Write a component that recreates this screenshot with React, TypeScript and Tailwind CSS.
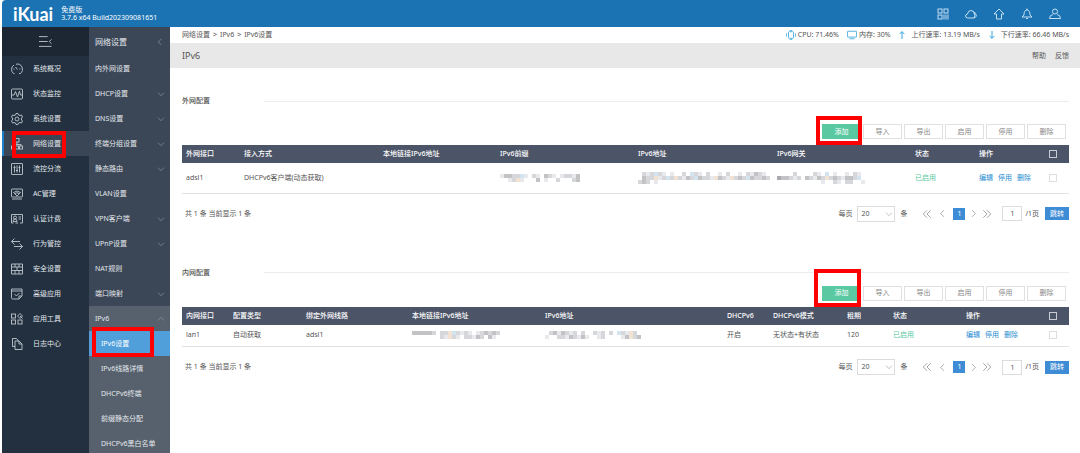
import type { ReactNode } from "react";

const UI_FONT = "font-['Noto_Sans','Noto_Sans_CJK_SC',sans-serif]";

type IconProps = { children: ReactNode; className?: string };

function Icon({ children, className = "size-3" }: IconProps) {
  return (
    <svg viewBox="0 0 24 24" fill="none" stroke="currentColor" strokeWidth="1.8" aria-hidden="true" className={`shrink-0 ${className}`}>
      {children}
    </svg>
  );
}

const down = <path d="M3 8l9 9 9-9" />;
const up = <path d="M3 16l9-9 9 9" />;
const left = <path d="M16 3l-9 9 9 9" />;
const right = <path d="M8 3l9 9-9 9" />;
const doubleLeft = <path d="M12 3l-9 9 9 9M21 3l-9 9 9 9" />;
const doubleRight = <path d="M3 3l9 9-9 9M12 3l9 9-9 9" />;

const mainMenu: { label: string; icon: ReactNode; active?: boolean }[] = [
  { label: "系统概况", icon: <path d="M7 21H5a10.500 10.500 0 0 1 1-17M10 2.500a10.500 10.500 0 0 1 9 18.500h-3M9 8l4 5M5 12h2M17 12h2" /> },
  { label: "状态监控", icon: <><rect x="1" y="2" width="22" height="20" rx="2" /><path d="M1 14h5l3-7 4 11 4-12 2 8h4" /></> },
  { label: "系统设置", icon: <><circle cx="12" cy="12" r="4" /><path d="M10 1h4l1 3 3 1 3-1 2 4-2 2v4l2 2-2 4-3-1-3 1-1 3h-4l-1-3-3-1-3 1-2-4 2-2v-4L1 8l2-4 3 1 3-1z" /></> },
  { label: "网络设置", icon: <><rect x="8" y="1" width="8" height="7" /><path d="M12 8v5M4 16v-3h16v3" /><rect x="1" y="16" width="6" height="6" /><rect x="9" y="16" width="6" height="6" /><rect x="17" y="16" width="6" height="6" /></>, active: true },
  { label: "流控分流", icon: <><rect x="1" y="1" width="22" height="22" rx="1" /><path d="M7 5v14M12 5v14M17 5v14M5 9h4M10 15h4M15 9h4" /></> },
  { label: "AC管理", icon: <><rect x="1" y="2" width="22" height="16" rx="1" /><path d="M5 9q7-6 14 0l-7 7zM8 11q4-3 8 0M2 22h20" /></> },
  { label: "认证计费", icon: <><path d="M5 20H1V3h22v17h-5M9 20h5" /><circle cx="8" cy="9" r="3" /><path d="M4 17q0-5 4-5t4 5zM15 8h5M15 12h5" /></> },
  { label: "行为管控", icon: <path d="M7 1L1 7h17M7 13L1 7M17 11l6 6H6M17 23l6-6" /> },
  { label: "安全设置", icon: <path d="M1 2h22v20H1zM1 8h22M1 15h22M8 2v6M16 2v6M12 8v7M8 15v7M16 15v7" /> },
  { label: "高级应用", icon: <path d="M1 2h21v14l-6 6H3q-2 0-2-3zM1 6h21M7 12l4 4 6-6M22 16h-6v6" /> },
  { label: "应用工具", icon: <><rect x="1" y="2" width="8" height="8" /><rect x="1" y="14" width="8" height="8" /><rect x="14" y="14" width="8" height="8" /><path d="M18 1l5 5-5 5-5-5zM18 6l5 5" /></> },
  { label: "日志中心", icon: <path d="M8 17H3V1h8l4 5M8 6h8l6 6v11H8zM16 6v6h6" /> },
];

const subMenu: { label: string; open?: boolean; expandable?: boolean }[] = [
  { label: "内外网设置" },
  { label: "DHCP设置", expandable: true },
  { label: "DNS设置", expandable: true },
  { label: "终端分组设置", expandable: true },
  { label: "静态路由", expandable: true },
  { label: "VLAN设置" },
  { label: "VPN客户端", expandable: true },
  { label: "UPnP设置", expandable: true },
  { label: "NAT规则" },
  { label: "端口映射", expandable: true },
  { label: "IPv6", expandable: true, open: true },
];

const ipv6Menu = ["IPv6设置", "IPv6线路详情", "DHCPv6终端", "前缀静态分配", "DHCPv6黑白名单"];

function Highlight({ className }: { className: string }) {
  return <span aria-hidden="true" className={`pointer-events-none absolute z-10 border-4 border-[#ff0000] ${className}`} />;
}

function TopBar() {
  const button = "grid size-4 place-items-center";
  return (
    <header className="flex h-[27px] shrink-0 items-center justify-between rounded-tl-sm bg-[#1c73b3] pr-[17px] pl-[11px] text-white">
      <div className="flex items-center gap-2">
        <span className="font-['Lato',sans-serif] text-[18px] leading-5 font-bold">iKuai</span>
        <div className="text-[7px] leading-2">
          <p>免费版</p>
          <p>3.7.6 x64 Build202309081651</p>
        </div>
      </div>
      <div className="flex items-center gap-3 text-[#d5eafa]">
        <button type="button" aria-label="二维码" className={button}>
          <Icon><rect x="2" y="2" width="8" height="8" /><rect x="14" y="2" width="8" height="8" /><rect x="2" y="14" width="8" height="8" /><path d="M14 13v10M18 13v10M22 13v10" /></Icon>
        </button>
        <button type="button" aria-label="云服务" className={button}>
          <Icon><path d="M5 20q-4-1-4-4t4-4q1-7 7-7t7 7q2 3-1 8zM17 8q4 1 4 4 3 2 1 5-1 2-4 3" /></Icon>
        </button>
        <button type="button" aria-label="升级" className={button}>
          <Icon><path d="M12 2L2 12h5v10h10V12h5z" /></Icon>
        </button>
        <button type="button" aria-label="通知" className={button}>
          <Icon><path d="M12 1v3M2 18h20l-4-4q0-10-6-10T6 14zM10 20q2 4 4 0" /></Icon>
        </button>
        <button type="button" aria-label="账户" className={button}>
          <Icon><circle cx="12" cy="7" r="5" /><path d="M8 13q-7 1-7 8h22q0-7-7-8" /></Icon>
        </button>
      </div>
    </header>
  );
}

function MainNav() {
  return (
    <nav className="w-[87px] shrink-0 bg-[#223040] text-[#e4e8ec]">
      <button type="button" aria-label="收起菜单" className="grid h-[29px] w-full place-items-center bg-[#1c2733]">
        <Icon className="size-[13px] text-[#b5bcc3]"><path d="M0 3h16M0 12h16M0 21h23M23 8l-4 4 4 4" /></Icon>
      </button>
      {mainMenu.map((item) => (
        <div key={item.label} className="relative">
          <a
            href="#"
            className={`flex h-[25px] items-center gap-[10px] border-l-2 pl-[7px] ${item.active ? "border-[#1c7fc9] bg-[#3a4656]" : "border-transparent"}`}
          >
            <Icon className="size-3 text-[#c0c7ce]">{item.icon}</Icon>
            {item.label}
          </a>
          {item.active && <Highlight className="top-0 left-[10px] h-[27px] w-[54px]" />}
        </div>
      ))}
    </nav>
  );
}

function SubNav() {
  return (
    <nav className="w-[81px] shrink-0 bg-[#3b4757] text-[#e4e8ec]">
      <div className="flex h-[29px] items-center justify-between pr-[6px] pl-[6px] text-[8px]">
        网络设置
        <Icon className="size-2 text-[#9aa3ad]">{left}</Icon>
      </div>
      {subMenu.map((item) => (
        <a
          key={item.label}
          href="#"
          className={`flex h-[25px] items-center justify-between pr-[5px] pl-[6px] ${item.open ? "bg-[#57616d]" : ""}`}
        >
          {item.label}
          {item.expandable && <Icon className="size-2 text-[#9aa3ad]">{item.open ? up : down}</Icon>}
        </a>
      ))}
      <div className="relative bg-[#57616d]">
        {ipv6Menu.map((label, i) => (
          <a key={label} href="#" className={`flex h-[25px] items-center pl-3 ${i === 0 ? "bg-[#509fdb] text-white" : ""}`}>
            {label}
          </a>
        ))}
        <Highlight className="-top-1 left-[3px] h-[30px] w-[62px]" />
      </div>
    </nav>
  );
}

function StatusBar() {
  return (
    <div className="flex h-4 items-center justify-between pr-[11px] pl-3">
      <div className="flex gap-[3px]">
        <a href="#">网络设置</a>
        <span>&gt;</span>
        <a href="#">IPv6</a>
        <span>&gt;</span>
        <a href="#">IPv6设置</a>
      </div>
      <div className="flex items-center gap-2">
        <span className="flex items-center gap-[2px]">
          <Icon className="size-[10px] text-[#36a3dc]"><rect x="6" y="4" width="12" height="16" rx="2" strokeWidth="2" /><path d="M9 1h6M9 23h6M1 8v8M23 8v8" strokeWidth="2" /></Icon>
          CPU: 71.46%
        </span>
        <span className="flex items-center gap-[2px]">
          <Icon className="size-[10px] text-[#36a3dc]"><rect x="1" y="3" width="22" height="14" rx="1" strokeWidth="2" /><path d="M6 21h12" strokeWidth="2" /></Icon>
          内存: 30%
        </span>
        <span className="flex items-center gap-[5px]">
          <Icon className="size-2 text-[#36a3dc]"><path d="M12 24V2M5 9l7-7 7 7" strokeWidth="3" /></Icon>
          上行速率: 13.19 MB/s
        </span>
        <span className="flex items-center gap-[5px]">
          <Icon className="size-2 text-[#36a3dc]"><path d="M12 0v22M5 15l7 7 7-7" strokeWidth="3" /></Icon>
          下行速率: 66.46 MB/s
        </span>
      </div>
    </div>
  );
}

const shades: Record<string, string> = {
  a: "#c3c3c6",
  b: "#d6d7da",
  c: "#e8e9ec",
  d: "#a9aaae",
  e: "#f1e2d4",
  f: "#d3e4f1",
};

// Each character is one 4px block of masked text, a dot leaves the block empty.
function Masked({ rows }: { rows: string[] }) {
  const width = rows[0].length * 4;
  const height = rows.length * 4;
  return (
    <svg role="img" aria-label="已隐藏" width={width} height={height} viewBox={`0 0 ${width} ${height}`} shapeRendering="crispEdges" className="block">
      {rows.flatMap((row, y) =>
        [...row].map((c, x) => c !== "." && <rect key={`${x}-${y}`} x={x * 4} y={y * 4} width="4" height="4" fill={shades[c]} />)
      )}
    </svg>
  );
}

type TableProps = { name: string; columns: { title: string; width: string }[]; cells: ReactNode[]; rowHeight: string };

function DataTable({ name, columns, cells, rowHeight }: TableProps) {
  return (
    <table className="mt-[6px] w-full table-fixed text-left">
      <colgroup>
        {columns.map((c) => <col key={c.title} className={c.width} />)}
        <col className="w-[35px]" />
      </colgroup>
      <thead className="bg-[#4c5467] text-white">
        <tr className="h-[18px]">
          {columns.map((c) => <th key={c.title} className="pl-1 font-medium whitespace-nowrap">{c.title}</th>)}
          <th className="pr-3">
            <input type="checkbox" aria-label={`${name}全选`} className="ml-auto block size-2 appearance-none border border-[#c8ccd3]" />
          </th>
        </tr>
      </thead>
      <tbody>
        <tr className={`border-b border-[#e2e2e2] ${rowHeight}`}>
          {cells.map((cell, i) => <td key={columns[i].title} className="pl-1 whitespace-nowrap">{cell}</td>)}
          <td className="pr-3">
            <input type="checkbox" aria-label={`${name}选择`} className="ml-auto block size-2 appearance-none border border-[#dedede]" />
          </td>
        </tr>
      </tbody>
    </table>
  );
}

function Toolbar({ highlight }: { highlight: string }) {
  return (
    <div className="flex justify-end gap-[2px] pr-[3px]">
      <div className="relative">
        <button type="button" className="block h-[15px] w-[39px] bg-[#5ac8a0] text-white">添加</button>
        <Highlight className={highlight} />
      </div>
      {["导入", "导出", "启用", "停用", "删除"].map((label) => (
        <button key={label} type="button" className="h-[15px] w-[39px] border border-[#e0e0e0] text-[#888]">{label}</button>
      ))}
    </div>
  );
}

function Pager({ id }: { id: string }) {
  const arrow = "grid size-[10px] place-items-center text-[#888]";
  return (
    <div className="mt-3 flex h-4 items-center justify-between pl-[3px]">
      <p>共 1 条 当前显示 1 条</p>
      <div className="flex items-center">
        <label htmlFor={`${id}-size`} className="mr-[5px]">每页</label>
        <div className="relative mr-[5px]">
          <select id={`${id}-size`} defaultValue="20" className="block h-4 w-[38px] appearance-none border border-[#dcdcdc] bg-white pl-[3px]">
            <option>20</option>
            <option>50</option>
          </select>
          <Icon className="pointer-events-none absolute top-1 right-[2px] size-2 text-[#999]">{down}</Icon>
        </div>
        <span className="mr-[15px]">条</span>
        <button type="button" aria-label="首页" className={`mr-[5px] ${arrow}`}><Icon className="size-[10px]">{doubleLeft}</Icon></button>
        <button type="button" aria-label="上一页" className={`mr-[6px] ${arrow}`}><Icon className="size-[9px]">{left}</Icon></button>
        <button type="button" className="mr-[3px] h-3 w-3 bg-[#3f8cd6] text-white">1</button>
        <button type="button" aria-label="下一页" className={`mr-1 ${arrow}`}><Icon className="size-[9px]">{right}</Icon></button>
        <button type="button" aria-label="末页" className={`mr-[10px] ${arrow}`}><Icon className="size-[10px]">{doubleRight}</Icon></button>
        <input id={`${id}-page`} aria-label="页码" defaultValue="1" className="mr-[3px] h-[15px] w-[20px] border border-[#dcdcdc] text-center" />
        <span className="mr-[6px]">/1页</span>
        <button type="button" className="h-[13px] w-[24px] bg-[#3f8cd6] text-white">跳转</button>
      </div>
    </div>
  );
}

function SectionTitle({ children }: { children: ReactNode }) {
  return (
    <div className="flex h-3 items-center">
      <h2 className="w-[82px] font-medium">{children}</h2>
      <span className="h-px flex-1 bg-[#ececec]" />
    </div>
  );
}

const rowActions = (
  <span className="flex gap-[5px] text-[#1c8ad0]">
    <a href="#">编辑</a>
    <a href="#">停用</a>
    <a href="#">删除</a>
  </span>
);

const enabled = <span className="text-[#5ac8a0]">已启用</span>;

const wanColumns = [
  { title: "外网接口", width: "w-[58px]" },
  { title: "接入方式", width: "w-[139px]" },
  { title: "本地链接IPv6地址", width: "w-[117px]" },
  { title: "IPv6前缀", width: "w-[138px]" },
  { title: "IPv6地址", width: "w-[139px]" },
  { title: "IPv6网关", width: "w-[138px]" },
  { title: "状态", width: "w-[64px]" },
  { title: "操作", width: "w-[59px]" },
];

const lanColumns = [
  { title: "内网接口", width: "w-[47px]" },
  { title: "配置类型", width: "w-[73px]" },
  { title: "绑定外网线路", width: "w-[106px]" },
  { title: "本地链接IPv6地址", width: "w-[133px]" },
  { title: "IPv6地址", width: "w-[182px]" },
  { title: "DHCPv6", width: "w-[46px]" },
  { title: "DHCPv6模式", width: "w-[74px]" },
  { title: "租期", width: "w-[46px]" },
  { title: "状态", width: "w-[73px]" },
  { title: "操作", width: "w-[72px]" },
];

export default function App() {
  return (
    <div className={`flex h-screen flex-col overflow-hidden bg-white pl-[2px] text-[7px] leading-[10px] text-[#555] ${UI_FONT}`}>
      <TopBar />
      <div className="flex min-h-0 flex-1">
        <MainNav />
        <SubNav />
        <main className="min-w-0 flex-1">
          <StatusBar />
          <div className="flex h-[25px] items-center justify-between bg-[#e8e8e8] pr-[11px] pl-3">
            <h1 className="text-[9px]">IPv6</h1>
            <div className="flex gap-[9px]">
              <a href="#">帮助</a>
              <a href="#">反馈</a>
            </div>
          </div>
          <div className="pt-[27px] pr-[11px] pl-3">
            <section>
              <SectionTitle>外网配置</SectionTitle>
              <div className="mt-[17px]"><Toolbar highlight="-top-2 -left-[6px] h-[29px] w-[46px]" /></div>
              <DataTable
                name="外网"
                rowHeight="h-[30px]"
                columns={wanColumns}
                cells={[
                  "adsl1",
                  "DHCPv6客户端(动态获取)",
                  "",
                  <Masked rows={["caabbfc.bc.abc.cbbca", "..cbec...a.c..b...ba"]} />,
                  <Masked rows={[".bcbfbc.c..b.fbc.b..c.b..c.bcabc.", ".abbecbfbebcabfabbceabcebabfabbab", "bab.c............................"]} />,
                  <Masked rows={["....b....bc.f.c..c.bc.", "daabcb.abcabebabcaabf.", "...........c..bc.bb..c"]} />,
                  enabled,
                  rowActions,
                ]}
              />
              <Pager id="wan" />
            </section>
            <section className="mt-[45px]">
              <SectionTitle>内网配置</SectionTitle>
              <div className="mt-[7px]"><Toolbar highlight="-top-[17px] -left-[8px] h-[38px] w-[47px]" /></div>
              <DataTable
                name="内网"
                rowHeight="h-[22px]"
                columns={lanColumns}
                cells={[
                  "lan1",
                  "自动获取",
                  "adsl1",
                  <Masked rows={["aaaaab.bbefbcbc.cbabab", ".......bcebc.bbcab.ac."]} />,
                  <Masked rows={[".bacabcb.b..bcb.b.fbceb.", "c..bbcabcac..cb....caebaf"]} />,
                  "开启",
                  "无状态+有状态",
                  "120",
                  enabled,
                  rowActions,
                ]}
              />
              <Pager id="lan" />
            </section>
          </div>
        </main>
      </div>
    </div>
  );
}
